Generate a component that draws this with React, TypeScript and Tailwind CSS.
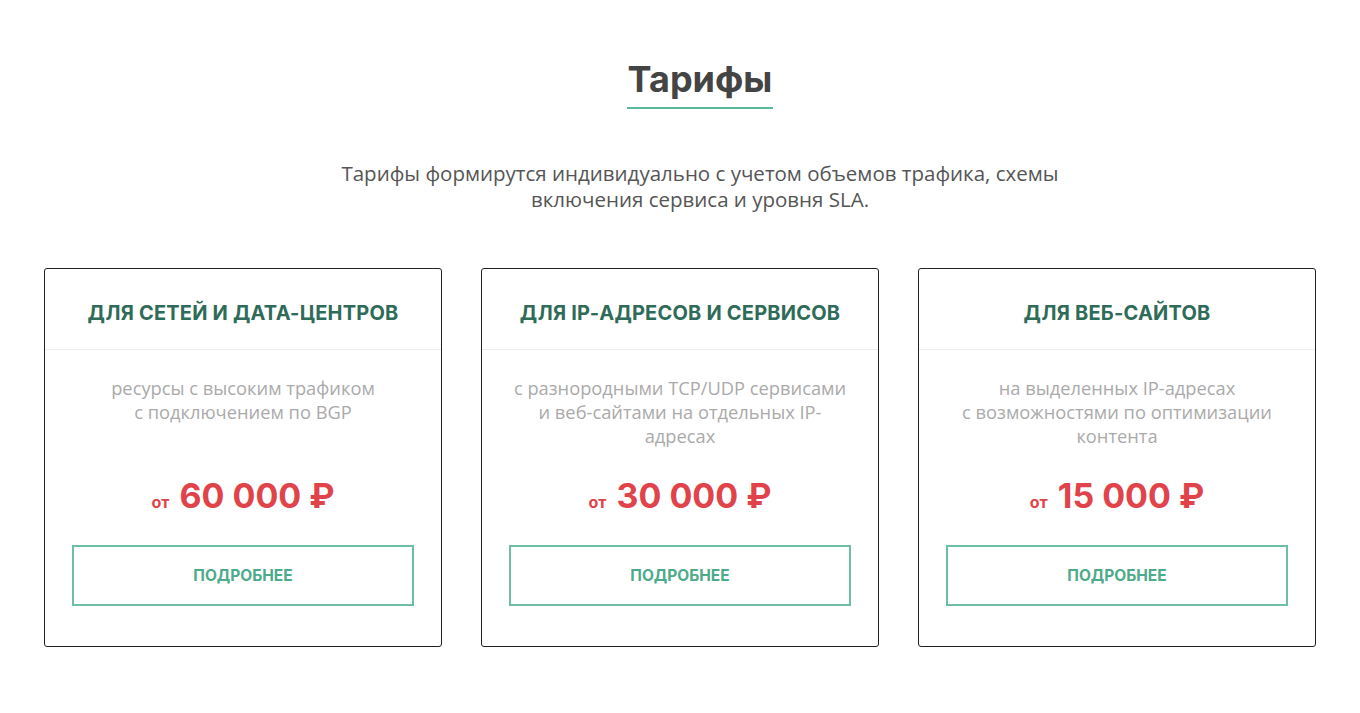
import React from "react";

const cards = [
  {
    title: "ДЛЯ СЕТЕЙ И ДАТА-ЦЕНТРОВ",
    lines: ["ресурсы с высоким трафиком", "с подключением по BGP"],
    price: "60 000",
  },
  {
    title: "ДЛЯ IP-АДРЕСОВ И СЕРВИСОВ",
    lines: ["с разнородными TCP/UDP сервисами", "и веб-сайтами на отдельных IP-", "адресах"],
    price: "30 000",
  },
  {
    title: "ДЛЯ ВЕБ-САЙТОВ",
    lines: ["на выделенных IP-адресах", "с возможностями по оптимизации", "контента"],
    price: "15 000",
  },
];

export default function App() {
  return (
    <div className="w-[1360px] h-[713px] bg-white font-['Open_Sans',sans-serif]">
      <div className="flex flex-col items-center pl-[40px] pt-[57px]">
        <h1 className="text-[36px] leading-[44px] font-bold text-[#444] font-['Inter',sans-serif] border-b-2 border-[#5bb89b] pb-[6px] px-[1px]">
          Тарифы
        </h1>
        <p className="mt-[51px] text-center text-[20.5px] leading-[26px] text-[#555]">
          Тарифы формирутся индивидуально с учетом объемов трафика, схемы
          <br />
          включения сервиса и уровня SLA.
        </p>
      </div>
      <div className="mt-[56px] px-[44px] grid grid-cols-3 gap-[39px]">
        {cards.map((c) => (
          <div key={c.title} className="border border-[#222] rounded-[3px] flex flex-col items-stretch h-[379px]">
            <div className="h-[81px] flex items-center justify-center pt-[8px] border-b border-[#eee]">
              <span className="text-[20px] font-bold text-[#2f6b59] font-['Inter',sans-serif] tracking-[0.2px]">
                {c.title}
              </span>
            </div>
            <div className="pt-[26px] h-[124px] text-center text-[18.3px] leading-[24px] text-[#aaa]">
              {c.lines.map((l, i) => (
                <div key={i}>{l}</div>
              ))}
            </div>
            <div className="flex items-baseline justify-center text-[#e0434a] font-['Inter',sans-serif] font-bold h-[46px]">
              <span className="text-[16px] mr-[10px]">от</span>
              <span className="text-[34px] leading-[44px]">{c.price} ₽</span>
            </div>
            <div className="px-[27px] mt-[25px]">
              <div className="h-[61px] border-2 border-[#6dbfa3] flex items-center justify-center text-[15.5px] font-bold text-[#4daa8a] font-['Inter',sans-serif]">
                ПОДРОБНЕЕ
              </div>
            </div>
          </div>
        ))}
      </div>
    </div>
  );
}
